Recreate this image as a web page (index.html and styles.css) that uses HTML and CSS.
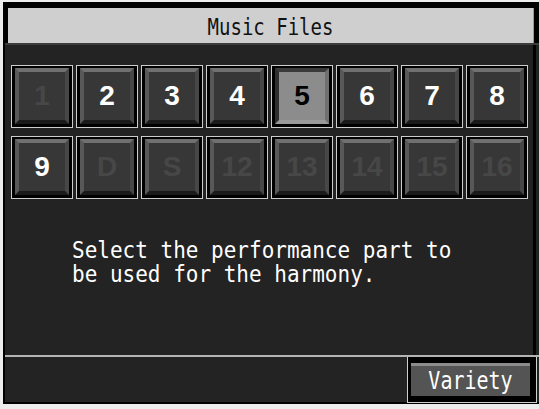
FILE: index.html
```html
<!DOCTYPE html>
<html>
<head>
<meta charset="utf-8">
<link rel="stylesheet" href="styles.css">
</head>
<body>
<div class="screen">
  <div class="titlebar">
    <div class="title"><span class="title-text">Music Files</span></div>
  </div>
  <div class="content">
    <div class="grid">
      <div class="btn"><div class="face off">1</div></div>
      <div class="btn"><div class="face">2</div></div>
      <div class="btn"><div class="face">3</div></div>
      <div class="btn"><div class="face">4</div></div>
      <div class="btn"><div class="face sel">5</div></div>
      <div class="btn"><div class="face">6</div></div>
      <div class="btn"><div class="face">7</div></div>
      <div class="btn"><div class="face">8</div></div>
      <div class="btn"><div class="face">9</div></div>
      <div class="btn"><div class="face off">D</div></div>
      <div class="btn"><div class="face off">S</div></div>
      <div class="btn"><div class="face off">12</div></div>
      <div class="btn"><div class="face off">13</div></div>
      <div class="btn"><div class="face off">14</div></div>
      <div class="btn"><div class="face off">15</div></div>
      <div class="btn"><div class="face off">16</div></div>
    </div>
    <div class="message">
      <div class="line">Select the performance part to</div>
      <div class="line">be used for the harmony.</div>
    </div>
  </div>
  <div class="footer">
    <div class="variety-frame"><div class="variety"><span class="variety-text">Variety</span></div></div>
  </div>
</div>
</body>
</html>
```
FILE: styles.css
```css
html, body {
  margin: 0;
  padding: 0;
  background: #ededed;
  width: 539px;
  height: 409px;
  overflow: hidden;
}
.screen {
  margin: 2px 0 0 3px;
  width: 536px;
  height: 400px;
  background: #232323;
  border-left: 2px solid #000;
  border-bottom: 2px solid #000;
  box-sizing: content-box;
  display: flex;
  flex-direction: column;
}
.titlebar {
  background: #000;
  padding: 6px 3px 0 3px;
  border-bottom: 2px solid #3c3c3c;
}
.title {
  background: #cfcfcf;
  height: 35px;
  width: 525px;
  display: flex;
  align-items: center;
  justify-content: center;
  border-right: 1px solid #9a9a9a;
}
.title-text {
  display: inline-block;
  font-family: "DejaVu Sans Mono", monospace;
  font-size: 19px;
  color: #111;
  transform: scaleY(1.25);
}
.content {
  flex: 1;
  padding: 20px 0 0 6px;
  border-right: 3px solid #000;
  margin-right: 5px;
}
.grid {
  display: grid;
  grid-template-columns: repeat(8, 62px);
  grid-auto-rows: 63px;
  column-gap: 3px;
  row-gap: 8px;
}
.btn {
  border: 1px solid #cdcdcd;
  background: #000;
  padding: 2px 3px 3px 3px;
  box-sizing: border-box;
  display: flex;
}
.face {
  flex: 1;
  border-style: solid;
  border-width: 4px 4px 4px 4px;
  border-color: #707070 #474747 #1a1a1a #585858;
  background: #373737;
  display: flex;
  align-items: center;
  justify-content: center;
  font-family: "Liberation Sans", Arial, sans-serif;
  font-weight: bold;
  font-size: 28px;
  color: #fff;
}
.face.off {
  color: #474747;
}
.face.sel {
  background: #8c8c8c;
  border-color: #3a3a3a #707070 #9a9a9a #2e2e2e;
  color: #000;
}
.message {
  padding: 39px 0 0 61px;
  font-family: "DejaVu Sans Mono", monospace;
  font-size: 21px;
  color: #fff;
}
.line {
  line-height: 24px;
  height: 24px;
  transform: scaleY(1.1);
  transform-origin: left center;
}
.footer {
  height: 47px;
  border-top: 2px solid #b4b4b4;
  display: flex;
  justify-content: flex-end;
  align-items: flex-start;
  box-sizing: border-box;
}
.variety-frame {
  border: 1px solid #cfcfcf;
  border-top: none;
  background: #000;
  padding: 6px 6px 5px 3px;
  height: 46px;
  box-sizing: border-box;
  margin-right: 4px;
}
.variety {
  width: 119px;
  height: 33px;
  background: #545454;
  border-top: 3px solid #8c8c8c;
  box-sizing: border-box;
  display: flex;
  align-items: center;
  justify-content: center;
}
.variety-text {
  display: inline-block;
  font-family: "DejaVu Sans Mono", monospace;
  font-size: 20px;
  color: #fff;
  transform: scaleY(1.2);
}
```
